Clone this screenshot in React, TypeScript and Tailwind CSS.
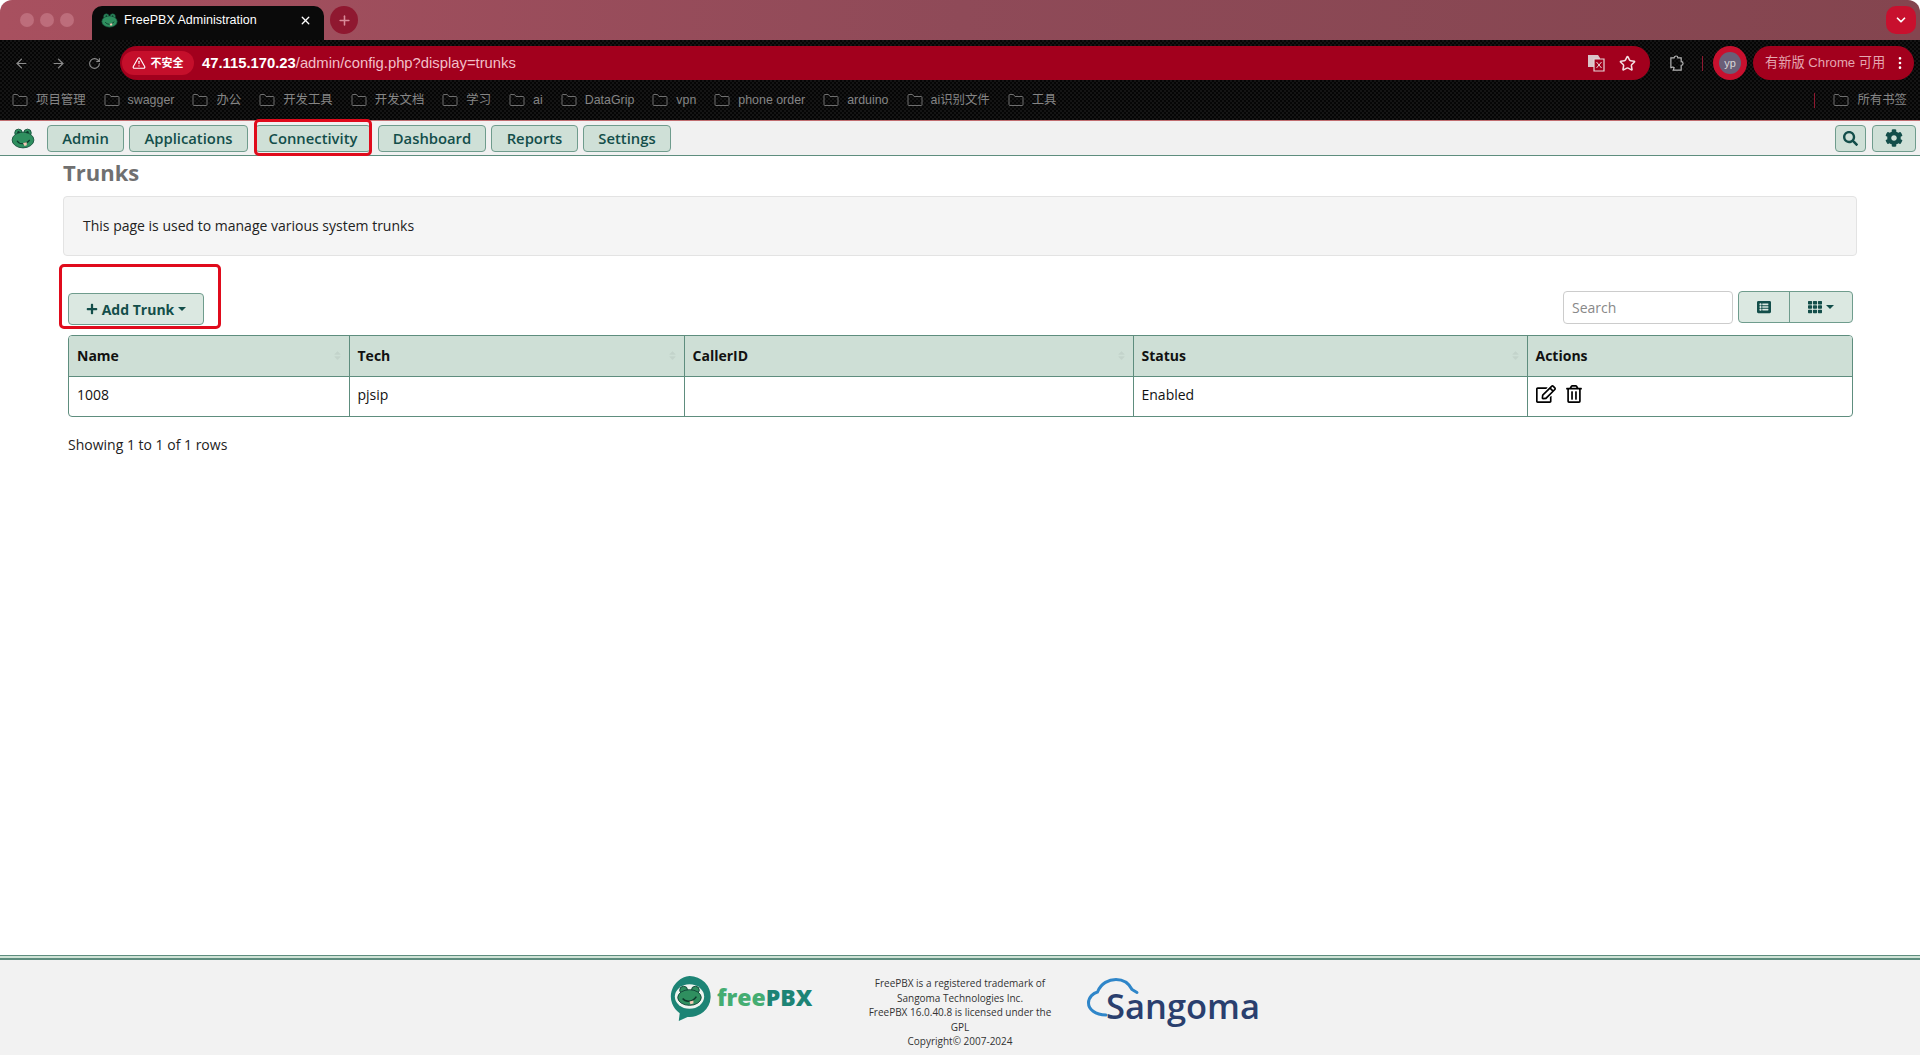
import { FaCog, FaListAlt, FaPlus, FaRegEdit, FaRegTrashAlt, FaSearch, FaSort, FaTh } from "react-icons/fa";
import { ArrowLeft, ArrowRight, ChevronDown, EllipsisVertical, Plus, RotateCw, Star, TriangleAlert, X } from "lucide-react";

const bookmarks = ["项目管理", "swagger", "办公", "开发工具", "开发文档", "学习", "ai", "DataGrip", "vpn", "phone order", "arduino", "ai识别文件", "工具"];
const navItems = ["Admin", "Applications", "Connectivity", "Dashboard", "Reports", "Settings"];
const navWidths: Record<string, string> = {
  Admin: "w-[77px]",
  Applications: "w-[119px]",
  Connectivity: "w-[116px] mx-[2px]",
  Dashboard: "w-[108px]",
  Reports: "w-[87px]",
  Settings: "w-[88px]",
};

const Frog = ({ className }: { className: string }) => (
  <svg viewBox="0 0 32 28" className={className}>
    <circle cx="10" cy="6.5" r="5" fill="#2f8f5f" stroke="#16513c" strokeWidth="1.2" />
    <circle cx="22" cy="6.5" r="5" fill="#2f8f5f" stroke="#16513c" strokeWidth="1.2" />
    <ellipse cx="16" cy="16" rx="14.5" ry="10.5" fill="#2f8f5f" stroke="#16513c" strokeWidth="1.2" />
    <circle cx="10" cy="5.5" r="1.6" fill="#0e3a2c" />
    <circle cx="22" cy="5.5" r="1.6" fill="#0e3a2c" />
    <path d="M8 17c3 5 11 6 17-1" fill="none" stroke="#0e3a2c" strokeWidth="1.6" />
    <path d="M16 20l5-1 0 4-3 1z" fill="#f3c9b5" />
  </svg>
);

const FolderIcon = () => (
  <svg viewBox="0 0 16 14" className="h-[14px] w-4 shrink-0" fill="none" stroke="#6f6f6f" strokeWidth="1">
    <path d="M1 2.5A1 1 0 0 1 2 1.5h3.5l1.5 2h7a1 1 0 0 1 1 1v7a1 1 0 0 1-1 1H2a1 1 0 0 1-1-1z" />
  </svg>
);

const Caret = () => <span className="ml-1 inline-block border-x-[4px] border-t-[4px] border-x-transparent border-t-[#134e4a] align-middle" />;

const BrowserChrome = () => (
  <div className="font-['Liberation_Sans','Noto_Sans_CJK_SC',sans-serif]">
    <div className="flex h-10 items-end rounded-t-xl bg-gradient-to-r from-[#a8505f] via-[#8f4a58] to-[#84454f] pl-[92px] pr-1">
      <div className="absolute left-[20px] top-[13px] flex gap-[6px]">
        <span className="h-[14px] w-[14px] rounded-full bg-[#bd6d7b]" />
        <span className="h-[14px] w-[14px] rounded-full bg-[#bd6d7b]" />
        <span className="h-[14px] w-[14px] rounded-full bg-[#bd6d7b]" />
      </div>
      <div className="flex h-[34px] w-[232px] items-center rounded-t-[10px] bg-[#0a0a0a] pb-[5px] pl-[9px] pr-[12px] text-white">
        <Frog className="h-[15px] w-[17px]" />
        <span className="ml-[6px] flex-1 text-[12.5px]">FreePBX Administration</span>
        <X size={13} strokeWidth={2.5} />
      </div>
      <div className="mb-[6px] ml-[6px] flex h-7 w-7 items-center justify-center rounded-full bg-[#8f1830] text-[#d98b99]">
        <Plus size={15} strokeWidth={2.5} />
      </div>
      <div className="mb-[6px] ml-auto flex h-7 w-[30px] items-center justify-center rounded-[10px] bg-[#c8102e] text-white">
        <ChevronDown size={14} strokeWidth={3} />
      </div>
    </div>
    <div className="bg-[#0a0a0a] bg-[repeating-conic-gradient(#141414_0%_25%,#050505_0%_50%)] bg-[length:4px_4px]">
      <div className="flex h-10 items-center pl-[14px] pr-[6px] pt-[6px] text-[#8c8c8c]">
        <ArrowLeft size={15} />
        <ArrowRight size={15} className="ml-[22px]" />
        <RotateCw size={13} className="ml-[22px]" />
        <div className="ml-[19px] flex h-[34px] w-[1531px] items-center rounded-full bg-[#a2001d] pl-[2px] pr-[6px]">
          <div className="flex h-6 w-[72px] items-center justify-center gap-[4px] rounded-full bg-[#c50f2b] text-[11px] font-bold text-white">
            <TriangleAlert size={14} />
            不安全
          </div>
          <span className="ml-2 text-[14.8px] font-semibold text-white">47.115.170.23</span>
          <span className="text-[14.8px] text-[#f2bfc8]">/admin/config.php?display=trunks</span>
          <svg viewBox="0 0 18 18" className="ml-auto h-[18px] w-[18px]">
            <path d="M1 1h10l2 3v9H1z" fill="#d9c4c8" />
            <path d="M7 5h10v12H7z" fill="#a2001d" stroke="#e6d5d8" strokeWidth="1.2" />
            <path d="M9.5 8l5 6M14.5 8l-5 6" stroke="#e6d5d8" strokeWidth="1" />
          </svg>
          <Star size={17} strokeWidth={2.2} className="ml-[14px] mr-[8px] text-[#f3dfe2]" />
        </div>
        <svg viewBox="0 0 16 18" className="ml-[19px] h-[17px] w-[15px]" fill="none" stroke="#b5b5b5" strokeWidth="1.3">
          <path d="M2 3h3.5a2 2 0 0 1 4 0H13v4a2 2 0 0 1 0 4v5H4.5l1-2.5a2 2 0 0 0-3 0H2z" />
        </svg>
        <span className="ml-[18px] h-[15px] w-px bg-[#8f1830]" />
        <div className="ml-[10px] flex h-[34px] w-[34px] items-center justify-center rounded-full bg-[#c8102e]">
          <span className="flex h-[22px] w-[22px] items-center justify-center rounded-full bg-[#6a5f78] text-[11px] text-[#d8d8d8]">yp</span>
        </div>
        <div className="ml-[6px] flex h-[34px] w-[161px] items-center justify-between rounded-full bg-[#a2001d] pl-3 pr-[6px] text-[13.2px] text-[#e5a6b1]">
          有新版 Chrome 可用
          <EllipsisVertical size={16} className="text-white" />
        </div>
      </div>
      <div className="flex h-10 items-center gap-[18px] pl-3 pr-[13px] text-[12.4px] text-[#858585]">
        {bookmarks.map((b) => (
          <div key={b} className="flex items-center gap-2">
            <FolderIcon />
            {b}
          </div>
        ))}
        <span className="ml-auto h-[15px] w-px bg-[#8f1830]" />
        <div className="flex items-center gap-2">
          <FolderIcon />
          所有书签
        </div>
      </div>
    </div>
  </div>
);

const NavBar = () => (
  <div className="flex h-9 items-center border-y border-b-[#5e8d7e] border-t-[#c06d70] bg-[#f1f1f1] pl-[11px] pr-1 text-[14.8px] font-semibold text-[#134e4a]">
    <Frog className="h-[21px] w-[24px]" />
    <div className="ml-3 flex gap-[5px]">
      {navItems.map((n) => (
        <div key={n} className={`${navWidths[n]} flex h-[27px] items-center justify-center rounded-[4px] border border-[#6f9c8d] bg-[#cfe0d7]`}>
          {n}
        </div>
      ))}
    </div>
    <div className="ml-auto flex gap-[6px]">
      <div className="flex h-[27px] w-[31px] items-center justify-center rounded-[4px] border border-[#6f9c8d] bg-[#cfe0d7]">
        <FaSearch size={15} />
      </div>
      <div className="flex h-[27px] w-[44px] items-center justify-center rounded-[4px] border border-[#6f9c8d] bg-[#cfe0d7]">
        <FaCog size={18} />
      </div>
    </div>
  </div>
);

const headers = [
  { label: "Name", width: "w-[280px]" },
  { label: "Tech", width: "w-[335px]" },
  { label: "CallerID", width: "w-[449px]" },
  { label: "Status", width: "w-[394px]" },
];

const TrunkTable = () => (
  <div className="overflow-hidden rounded-[4px] border border-[#5e8d7e]">
    <table className="w-full table-fixed border-collapse text-[14px] text-[#111]">
      <thead>
        <tr className="h-10 bg-[#cedfd6] text-left">
          {headers.map((h) => (
            <th key={h.label} className={`${h.width} relative border-r border-[#5e8d7e] px-2 font-bold`}>
              {h.label}
              <FaSort size={11} className="absolute right-[6px] top-[14px] text-black/5" />
            </th>
          ))}
          <th className="px-2 font-bold">Actions</th>
        </tr>
      </thead>
      <tbody>
        <tr className="h-10 border-t border-[#5e8d7e]">
          <td className="border-r border-[#5e8d7e] px-2 pb-1">1008</td>
          <td className="border-r border-[#5e8d7e] px-2 pb-1">pjsip</td>
          <td className="border-r border-[#5e8d7e] px-2 pb-1"></td>
          <td className="border-r border-[#5e8d7e] px-2 pb-1">Enabled</td>
          <td className="px-2 pb-1">
            <div className="flex items-center gap-[9px] text-black">
              <FaRegEdit size={20} />
              <FaRegTrashAlt size={18} />
            </div>
          </td>
        </tr>
      </tbody>
    </table>
  </div>
);

const Footer = () => (
  <div className="flex h-[100px] flex-col">
    <div className="h-[5px] border-y border-b-2 border-[#5e8d7e] bg-[#cfe3d6]" />
    <div className="flex flex-1 justify-center bg-[#f2f2f2] pl-[6px]">
      <div className="flex pt-[16px]">
        <div className="flex w-[193px] items-start">
          <svg viewBox="0 0 46 46" className="h-[45px] w-[45px]">
            <path d="M23 0a21.5 21 0 1 1-2 41.9L12 46l1-8A21.5 21 0 0 1 23 0z" fill="#1d8475" />
            <ellipse cx="23" cy="21" rx="15" ry="12.5" fill="#eef5f0" />
            <circle cx="17" cy="14.5" r="4" fill="#2f8f5f" stroke="#12493a" />
            <circle cx="29" cy="14.5" r="4" fill="#2f8f5f" stroke="#12493a" />
            <ellipse cx="23" cy="22" rx="12" ry="8" fill="#2f8f5f" stroke="#12493a" />
            <path d="M16 23c3 4 10 4 14-2" fill="none" stroke="#0e3a2c" strokeWidth="1.5" />
            <path d="M23 26l4-1 0 3-3 1z" fill="#f3c9b5" />
          </svg>
          <span className="ml-[5px] mt-[6px] font-['Open_Sans',sans-serif] text-[23px] leading-[30px] font-extrabold text-[#45ad72]">
            free<span className="text-[#1d8475]">PBX</span>
          </span>
        </div>
        <div className="w-[200px] text-center text-[10px] leading-[14.5px] text-[#333]">
          FreePBX is a registered trademark of
          <br />
          Sangoma Technologies Inc.
          <br />
          FreePBX 16.0.40.8 is licensed under the
          <br />
          GPL
          <br />
          Copyright© 2007-2024
        </div>
        <div className="relative ml-[27px] h-[50px] w-[172px]">
          <svg viewBox="0 0 60 42" className="absolute left-0 top-[2px] h-[42px] w-[60px]" fill="none" stroke="#2f86c9" strokeWidth="3">
            <path d="M19 37C8 37 1.5 31 1.5 25c0-6 5-10 9-11C14 5 22 1.5 29 1.5c7 0 13 4 16 10l5 3" strokeLinecap="round" />
          </svg>
          <span className="absolute left-[19px] top-[5px] font-['Open_Sans',sans-serif] text-[34.5px] leading-[50px] font-semibold text-[#2a3f6e]">
            Sangoma
          </span>
        </div>
      </div>
    </div>
  </div>
);

export default function App() {
  return (
    <div className="relative flex h-[1055px] flex-col overflow-hidden bg-white font-['Open_Sans',sans-serif]">
      <BrowserChrome />
      <NavBar />
      <main className="flex-1 pl-[63px] pr-[63px]">
        <h1 className="mt-[1px] text-[22px] leading-[30px] font-bold text-[#707070]">Trunks</h1>
        <div className="mt-[9px] flex h-[60px] items-center rounded-[4px] border border-[#e3e3e3] bg-[#f5f5f5] pb-[2px] pl-[19px] text-[14px] text-[#222]">
          This page is used to manage various system trunks
        </div>
        <div className="pl-[5px] pr-[4px]">
          <div className="mt-[35px] flex items-start justify-between">
            <div className="relative mt-[2px]">
              <div className="flex h-8 w-[136px] items-center justify-center rounded-[4px] border border-[#6f9c8d] bg-[#dbe8e1] text-[14px] font-bold text-[#134e4a]">
                <FaPlus size={12} className="mr-1" />
                Add Trunk
                <Caret />
              </div>
              <div className="absolute -left-[9px] -top-[29px] h-[65px] w-[162px] rounded-[5px] border-[3px] border-[#e00b1c]" />
            </div>
            <div className="flex gap-[5px]">
              <input
                placeholder="Search"
                className="h-[33px] w-[170px] rounded-[4px] border border-[#ccc] bg-white px-2 text-[14px] placeholder-[#888]"
              />
              <div className="flex h-8 w-[115px] rounded-[4px] border border-[#6f9c8d] bg-[#dbe8e1] text-[#134e4a]">
                <div className="flex w-[51px] items-center justify-center border-r border-[#6f9c8d]">
                  <FaListAlt size={14} />
                </div>
                <div className="flex flex-1 items-center justify-center">
                  <FaTh size={14} />
                  <Caret />
                </div>
              </div>
            </div>
          </div>
          <div className="mt-[10px]">
            <TrunkTable />
          </div>
          <p className="mt-[17px] text-[14px] text-[#222]">Showing 1 to 1 of 1 rows</p>
        </div>
      </main>
      <Footer />
      <div className="absolute left-[254px] top-[119px] h-[37px] w-[118px] rounded-[5px] border-[3px] border-[#e00b1c]" />
    </div>
  );
}
